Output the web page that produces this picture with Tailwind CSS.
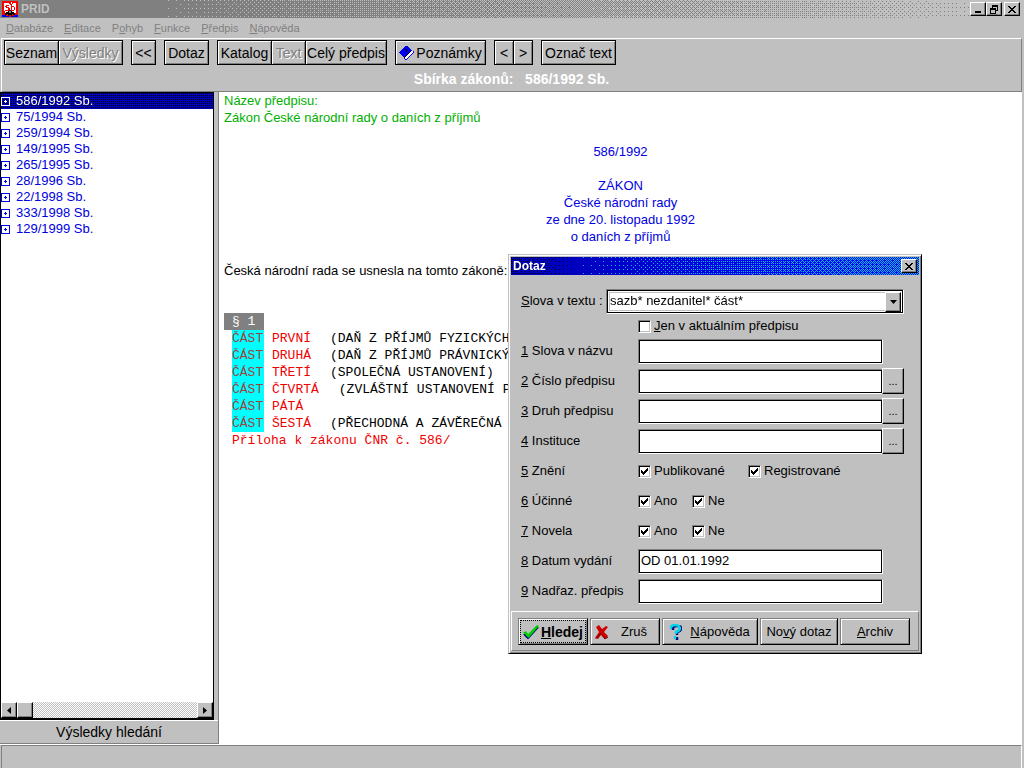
<!DOCTYPE html>
<html lang="cs">
<head>
<meta charset="utf-8">
<title>PRID</title>
<script src="https://cdn.jsdelivr.net/npm/@tailwindcss/browser@4"></script>
</head>
<body class="h-screen flex flex-col overflow-hidden bg-[#c0c0c0] text-black text-[13px] leading-4 font-['Liberation_Sans',Arial,sans-serif]">

<svg class="hidden">
  <symbol id="plus" viewBox="0 0 9 9"><path d="M.5 .5h8v8h-8zM3 4.500h3M4.500 3v3" fill="none" stroke="currentColor" shape-rendering="crispEdges"/></symbol>
  <symbol id="close" viewBox="0 0 8 7"><path d="M0 0h2v1h1v1h2V1h1V0h2v1H7v1H6v1H5v1h1v1h1v1h1v1H6V6H5V5H3v1H2v1H0V6h1V5h1V4h1V3H2V2H1V1H0z" shape-rendering="crispEdges"/></symbol>
  <symbol id="tick" viewBox="0 0 7 7"><path d="M0 2h1v1h1v1h1V3h1V2h1V1h1V0h1v3H6v1H5v1H4v1H3v1H2V6H1V5H0z" shape-rendering="crispEdges"/></symbol>
</svg>

<!-- Title bar -->
<header class="relative h-[18px] shrink-0 flex items-center">
  <canvas class="absolute inset-0 size-full" data-dither="gray"></canvas>
  <div class="relative flex-1 flex items-center gap-[3px] pl-[2px]">
    <svg class="w-4 h-4" viewBox="0 0 16 16" shape-rendering="crispEdges">
      <path fill="#f00" d="M0 0h16v16H0z"/>
      <path fill="#fff" d="M2 2h5v1h1v1h1V1h1v2h1V2h3v10H2z"/>
      <path fill="#f00" d="M4 4h3v1H4zM3 5h2v1H3zM4 6h3v1H4zM6 7h2v2H6zM3 9h4v1H3zM9 3h1v7H9zM10 5h2v1h-2zM12 6h1v3h-1zM10 9h2v1h-2zM2 10h1v2H2z"/>
      <path fill="#000" d="M7 9h2v1h1v1h2v1h1v2h-2v-1h-1v2H9v-1H7v1H6v-2H5v1H3v-2h1v-1h2v-1h1z"/>
      <path fill="#808080" d="M7 10h2v2H7z"/>
      <path fill="#00f" d="M0 14h4v1h3v1H0zM12 14h4v2H9v-1h3z"/>
    </svg>
    <h1 class="text-[12px] font-bold text-[#c0c0c0]">PRID</h1>
  </div>
  <div class="relative flex pr-1">
    <button aria-label="Minimalizovat" class="w-4 h-[14px] flex items-end justify-center pb-[2px] bg-[#c0c0c0] border border-t-white border-l-white border-r-black border-b-black shadow-[inset_-1px_-1px_#808080]"><svg class="w-[6px] h-[2px]" viewBox="0 0 6 2"><path d="M0 0h6v2H0z"/></svg></button>
    <button aria-label="Obnovit" class="w-4 h-[14px] flex items-center justify-center bg-[#c0c0c0] border border-t-white border-l-white border-r-black border-b-black shadow-[inset_-1px_-1px_#808080]"><svg class="w-2 h-[9px]" viewBox="0 0 8 9" shape-rendering="crispEdges"><path d="M2 0h6v6H6V5h1V2H3v1H2zM0 3h6v6H0zM1 5v3h4V5z" fill-rule="evenodd"/></svg></button>
    <button aria-label="Zavřít" class="ml-[2px] w-4 h-[14px] flex items-center justify-center bg-[#c0c0c0] border border-t-white border-l-white border-r-black border-b-black shadow-[inset_-1px_-1px_#808080]"><svg class="w-2 h-[7px]"><use href="#close"/></svg></button>
  </div>
</header>

<!-- Menu -->
<nav class="h-5 shrink-0 flex items-center gap-[11px] pl-[6px] text-[11px] text-[#808080]">
  <a href="#"><u>D</u>atabáze</a><a href="#"><u>E</u>ditace</a><a href="#">P<u>o</u>hyb</a><a href="#"><u>F</u>unkce</a><a href="#"><u>P</u>ředpis</a><a href="#"><u>N</u>ápověda</a>
</nav>

<!-- Toolbar -->
<section class="h-[54px] shrink-0 ml-px mr-[2px] border border-t-white border-l-white border-r-[#808080] border-b-[#808080]">
  <div class="pt-px pl-[2px] flex gap-2 text-[14px] whitespace-nowrap [&_button]:h-[25px] [&_button]:border [&_button]:border-black [&_button]:shadow-[inset_1px_1px_#fff,inset_-1px_-1px_#808080]">
    <div class="flex"><button class="w-[55px]">Seznam</button><button disabled class="w-[65px] -ml-px text-[#808080] [text-shadow:1px_1px_#fff]">Výsledky</button></div>
    <button class="w-[25px]">&lt;&lt;</button>
    <button class="w-[45px]">Dotaz</button>
    <div class="flex"><button class="w-[55px]">Katalog</button><button disabled class="w-[35px] -ml-px text-[#808080] [text-shadow:1px_1px_#fff]">Text</button><button class="w-[82px] -ml-px">Celý předpis</button></div>
    <button class="w-[91px] flex items-center justify-center gap-[2px]">
      <svg class="w-[15px] h-[14px]" viewBox="0 0 15 14" shape-rendering="crispEdges"><path fill="#0000f0" d="M0 6h1V5h1V4h1V3h1V2h1V1h1V0h3v1h1v1h1v1h1v1h1v1h-1v1h-1v1h-1v1H9v1H8v1H7v1H6v1H5v-1H4v-1H3V9H2V8H1V7H0z"/><path fill="#fff" d="M6 11h1v-1h1V9h1V8h1V7h1V6h1V5h2v2h-1v1h-1v1h-1v1h-1v1H9v1H8v1H6z"/><path d="M5 11.500h1M6 10.500h1M7 9.500h1M8 8.500h1M9 7.500h1M10 6.500h1M11 5.500h1M6 3.500h2M8 4.500h1M7 5.500h1" stroke="#000"/><path fill="#0000f0" d="M5 12h1v1h2v1H6v-1H5zM8 12h1v1H8zM9 11h1v1H9zM10 10h1v1h-1zM11 9h1v1h-1zM12 8h1v1h-1zM13 7h1v1h-1zM14 5h1v2h-1z"/></svg>
      Poznámky</button>
    <div class="flex"><button class="w-5">&lt;</button><button class="w-5 -ml-px">&gt;</button></div>
    <button class="w-[75px]">Označ text</button>
  </div>
  <h2 class="h-[26px] pt-px flex items-center justify-center text-[14px] font-bold text-white whitespace-pre">Sbírka zákonů:   586/1992 Sb.</h2>
</section>

<!-- Work area -->
<main class="flex-1 min-h-0 flex mr-[2px] bg-white">
  <aside class="w-[219px] shrink-0 flex flex-col bg-[#c0c0c0] border-r border-[#808080]">
    <div class="flex-1 flex flex-col w-[214px] bg-white border border-b-2 border-black">
      <ul class="flex-1 text-[#0000e0] [&_a]:flex [&_a]:items-center [&_a]:gap-[6px] [&_a]:h-4 [&_svg]:size-[9px]">
        <li class="relative text-white"><canvas class="absolute inset-0 size-full" data-dither="navy"></canvas><a href="#" class="relative"><svg><use href="#plus"/></svg>586/1992 Sb.</a></li>
        <li><a href="#"><svg><use href="#plus"/></svg>75/1994 Sb.</a></li>
        <li><a href="#"><svg><use href="#plus"/></svg>259/1994 Sb.</a></li>
        <li><a href="#"><svg><use href="#plus"/></svg>149/1995 Sb.</a></li>
        <li><a href="#"><svg><use href="#plus"/></svg>265/1995 Sb.</a></li>
        <li><a href="#"><svg><use href="#plus"/></svg>28/1996 Sb.</a></li>
        <li><a href="#"><svg><use href="#plus"/></svg>22/1998 Sb.</a></li>
        <li><a href="#"><svg><use href="#plus"/></svg>333/1998 Sb.</a></li>
        <li><a href="#"><svg><use href="#plus"/></svg>129/1999 Sb.</a></li>
      </ul>
      <div class="h-4 flex bg-[repeating-conic-gradient(#fff_0_25%,#c0c0c0_0_50%)] bg-[length:2px_2px]">
        <button aria-label="Doleva" class="w-4 flex items-center justify-center bg-[#c0c0c0] border border-t-white border-l-white border-r-black border-b-black shadow-[inset_-1px_-1px_#808080]"><svg class="w-1 h-[7px]" viewBox="0 0 4 7"><path d="M4 0v7L0 3.500z"/></svg></button>
        <button aria-label="Posuvník" class="w-4 bg-[#c0c0c0] border border-t-white border-l-white border-r-black border-b-black shadow-[inset_-1px_-1px_#808080]"></button>
        <button aria-label="Doprava" class="ml-auto w-4 flex items-center justify-center bg-[#c0c0c0] border border-t-white border-l-white border-r-black border-b-black shadow-[inset_-1px_-1px_#808080]"><svg class="w-1 h-[7px]" viewBox="0 0 4 7"><path d="M0 0v7l4-3.500z"/></svg></button>
      </div>
    </div>
    <h3 class="h-6 border-y border-t-white border-b-[#808080] flex items-center justify-center text-[14px]">Výsledky hledání</h3>
  </aside>

  <article class="flex-1 min-w-0 leading-[17px] whitespace-nowrap">
    <div class="pl-[5px] text-[#00b000]"><p>Název předpisu:</p><p>Zákon České národní rady o daních z příjmů</p></div>
    <div class="py-[17px] text-center text-[#0000e0]">
      <p class="pb-[17px]">586/1992</p>
      <p>ZÁKON</p><p>České národní rady</p><p>ze dne 20. listopadu 1992</p><p>o daních z příjmů</p>
    </div>
    <p class="pl-[5px] pb-[34px]">Česká národní rada se usnesla na tomto zákoně:</p>
    <div class="pl-[5px] font-['Liberation_Mono',monospace]">
      <p class="w-10 pl-2 bg-[#808080] text-white">§ 1</p>
      <div class="pl-2 [&>p]:flex [&>p]:gap-2 [&_mark]:w-8 [&_mark]:bg-[#00ffff] [&_mark]:text-[#a04040] [&_b]:min-w-[50px] [&_b]:font-normal [&_b]:text-[#f00000]">
        <p><mark>ČÁST</mark><b>PRVNÍ</b><span>(DAŇ Z PŘÍJMŮ FYZICKÝCH</span></p>
        <p><mark>ČÁST</mark><b>DRUHÁ</b><span>(DAŇ Z PŘÍJMŮ PRÁVNICKÝ</span></p>
        <p><mark>ČÁST</mark><b>TŘETÍ</b><span>(SPOLEČNÁ USTANOVENÍ)</span></p>
        <p><mark>ČÁST</mark><b class="pr-3">ČTVRTÁ</b><span>(ZVLÁŠTNÍ USTANOVENÍ P</span></p>
        <p><mark>ČÁST</mark><b>PÁTÁ</b></p>
        <p><mark>ČÁST</mark><b>ŠESTÁ</b><span>(PŘECHODNÁ A ZÁVĚREČNÁ</span></p>
        <p><b>Příloha k zákonu ČNR č. 586/</b></p>
      </div>
    </div>
  </article>
</main>

<!-- Status bar -->
<footer class="h-6 shrink-0 border-t border-white mr-[2px]"><div class="h-full ml-px border-t border-l border-r border-r-white border-t-[#808080] border-l-[#808080]"></div></footer>

<!-- Query dialog -->
<form role="dialog" aria-label="Dotaz" class="absolute left-[508px] top-[254px] w-[414px] bg-[#c0c0c0] p-[2px] border border-t-[#c0c0c0] border-l-[#c0c0c0] border-r-black border-b-black shadow-[inset_1px_1px_#fff,inset_-1px_-1px_#808080]">
  <div class="relative h-[18px] flex items-center">
    <canvas class="absolute inset-0 size-full" data-dither="blue"></canvas>
    <h2 class="relative flex-1 pl-[2px] text-[12px] font-bold text-white">Dotaz</h2>
    <button type="button" aria-label="Zavřít" class="relative mr-[2px] w-4 h-[14px] flex items-center justify-center bg-[#c0c0c0] border border-t-white border-l-white border-r-black border-b-black shadow-[inset_-1px_-1px_#808080]"><svg class="w-2 h-[7px]"><use href="#close"/></svg></button>
  </div>

  <div class="pt-[11px] pb-[5px] pl-[10px] pr-[15px]
    [&_.row]:h-[30px] [&_.row]:flex [&_.row]:items-center [&_.name]:w-[117px] [&_.name]:shrink-0
    [&_.text]:w-[245px] [&_.text]:h-[25px] [&_.text]:bg-white [&_.text]:pl-[2px] [&_.text]:pb-[2px] [&_.text]:border [&_.text]:border-t-[#808080] [&_.text]:border-l-[#808080] [&_.text]:border-r-white [&_.text]:border-b-white [&_.text]:shadow-[inset_0_0_0_1px_#000] [&_.text]:outline-none
    [&_.more]:w-[22px] [&_.more]:h-[26px] [&_.more]:-ml-px [&_.more]:bg-[#c0c0c0] [&_.more]:border [&_.more]:border-t-white [&_.more]:border-l-white [&_.more]:border-r-black [&_.more]:border-b-black [&_.more]:shadow-[inset_-1px_-1px_#808080] [&_.more]:text-[11px]
    [&_.tick]:grid [&_.tick]:grid-cols-[13px_auto] [&_.tick]:gap-x-[3px] [&_.tick]:items-center
    [&_.tick_input]:appearance-none [&_.tick_input]:row-start-1 [&_.tick_input]:col-start-1 [&_.tick_input]:size-[13px] [&_.tick_input]:bg-white [&_.tick_input]:border [&_.tick_input]:border-t-[#808080] [&_.tick_input]:border-l-[#808080] [&_.tick_input]:border-r-white [&_.tick_input]:border-b-white [&_.tick_input]:shadow-[inset_1px_1px_#000,inset_-1px_-1px_#c0c0c0]
    [&_.tick_svg]:row-start-1 [&_.tick_svg]:col-start-1 [&_.tick_svg]:size-[7px] [&_.tick_svg]:ml-[3px] [&_.tick_svg]:pointer-events-none [&_.tick_svg]:z-10">
    <div class="row">
      <label for="words" class="w-[85px] shrink-0"><u>S</u>lova v textu :</label>
      <div class="relative flex-1">
        <select id="words" class="appearance-none w-full h-[25px] pl-[3px] pb-px bg-white border border-t-[#808080] border-l-[#808080] border-r-white border-b-white shadow-[inset_0_0_0_1px_#000,inset_0_0_0_2px_#fff,inset_0_0_0_3px_#c0c0c0] outline-none"><option>sazb* nezdanitel* část*</option></select>
        <span class="absolute right-[3px] top-[3px] w-4 h-5 flex items-center justify-center bg-[#c0c0c0] border border-t-white border-l-white border-r-black border-b-black shadow-[inset_-1px_-1px_#808080] pointer-events-none"><svg class="w-[7px] h-1" viewBox="0 0 7 4"><path d="M0 0h7L3.500 4z"/></svg></span>
      </div>
    </div>
    <div class="h-5 flex items-center pl-[117px]"><label class="tick"><input type="checkbox"><span><u>J</u>en v aktuálním předpisu</span></label></div>
    <div class="row"><label class="name" for="f1"><u>1</u> Slova v názvu</label><input class="text" id="f1" type="text"></div>
    <div class="row"><label class="name" for="f2"><u>2</u> Číslo předpisu</label><input class="text" id="f2" type="text"><button type="button" class="more">...</button></div>
    <div class="row"><label class="name" for="f3"><u>3</u> Druh předpisu</label><input class="text" id="f3" type="text"><button type="button" class="more">...</button></div>
    <div class="row"><label class="name" for="f4"><u>4</u> Instituce</label><input class="text" id="f4" type="text"><button type="button" class="more">...</button></div>
    <div class="row" role="group" aria-labelledby="g5"><span class="name" id="g5"><u>5</u> Znění</span>
      <label class="tick w-[110px]"><input type="checkbox" checked><svg><use href="#tick"/></svg><span>Publikované</span></label>
      <label class="tick"><input type="checkbox" checked><svg><use href="#tick"/></svg><span>Registrované</span></label></div>
    <div class="row" role="group" aria-labelledby="g6"><span class="name" id="g6"><u>6</u> Účinné</span>
      <label class="tick w-[54px]"><input type="checkbox" checked><svg><use href="#tick"/></svg><span>Ano</span></label>
      <label class="tick"><input type="checkbox" checked><svg><use href="#tick"/></svg><span>Ne</span></label></div>
    <div class="row" role="group" aria-labelledby="g7"><span class="name" id="g7"><u>7</u> Novela</span>
      <label class="tick w-[54px]"><input type="checkbox" checked><svg><use href="#tick"/></svg><span>Ano</span></label>
      <label class="tick"><input type="checkbox" checked><svg><use href="#tick"/></svg><span>Ne</span></label></div>
    <div class="row"><label class="name" for="f8"><u>8</u> Datum vydání</label><input class="text" id="f8" type="text" value="OD 01.01.1992"></div>
    <div class="row"><label class="name" for="f9"><u>9</u> Nadřaz. předpis</label><input class="text" id="f9" type="text"></div>
  </div>

  <div class="h-10 pt-[6px] pl-[6px] flex gap-[2px] border border-t-white border-l-white border-r-[#808080] border-b-[#808080] [&_button]:h-[27px] [&_button]:flex [&_button]:items-center [&_button]:justify-center [&_button]:whitespace-nowrap [&_button]:border [&_button]:border-t-[#808080] [&_button]:border-l-[#808080] [&_button]:border-r-black [&_button]:border-b-black [&_button]:shadow-[inset_1px_1px_#fff,inset_-1px_-1px_#808080]">
    <button type="submit" class="w-[70px] p-px font-bold"><span class="flex size-full items-center justify-center gap-[2px] border border-dotted border-black text-[14px]">
      <svg class="w-4 h-[14px]" viewBox="0 0 16 14"><path d="m1 9 4 4L15 2" fill="none" stroke="#000080" stroke-width="2"/><path d="M0 7.500 3 6l2 3 9-9 2 1L5.500 13z" fill="#00d000"/></svg><span><u>H</u>ledej</span></span></button>
    <button type="button" class="w-[70px] gap-3 pr-2"><svg class="w-[14px] h-[14px]" viewBox="0 0 14 14"><path d="M1 2 4 0l3 4 4-3 2 1-4 5 4 4-3 3-4-4-3 4-3-1 4-6z" fill="#d00000"/><path d="M1 13.500 6 8m1 2 3 4 3-2" fill="none" stroke="#600"/></svg>Zruš</button>
    <button type="button" class="w-24 gap-2"><svg class="w-3 h-4" viewBox="0 0 12 16"><path d="M2 6V4q0-2 4-2t4 2q0 3-4 4v3M6 13v3" fill="none" stroke="#000080" stroke-width="2.500" transform="translate(1 0)"/><path d="M1 5V4q0-3 4-3t5 3q0 3-4 4v2M5 12v3" fill="none" stroke="#00d8e8" stroke-width="2.500"/></svg><span><u>N</u>ápověda</span></button>
    <button type="button" class="w-[78px]"><span>No<u>v</u>ý dotaz</span></button>
    <button type="button" class="w-[70px]"><span><u>A</u>rchiv</span></button>
  </div>
</form>

<script>
// Paints ordered-dither fills: each ramp returns [base, second colour, share of the second].
const bayer = [0,32,8,40,2,34,10,42,48,16,56,24,50,18,58,26,12,44,4,36,14,46,6,38,60,28,52,20,62,30,54,22,3,35,11,43,1,33,9,41,51,19,59,27,49,17,57,25,15,47,7,39,13,45,5,37,63,31,55,23,61,29,53,21];
const ramps = {
  gray: t => [[128,128,128], [192,192,192], (t - 0.15) / 0.83],
  navy: () => [[0,0,192], [0,0,0], 0.25],
  blue: t => t < 0.15 ? [[0,0,192], [0,0,0], 0.25 - t * 1.5] : [[0,0,Math.min(255, 175 + t * 110)], [0,192,210], (t - 0.15) * 0.6]
};
function paint() {
  document.querySelectorAll('canvas[data-dither]').forEach(c => {
    const w = c.width = c.clientWidth, h = c.height = c.clientHeight;
    const g = c.getContext('2d'), img = g.createImageData(w, h);
    for (let y = 0; y < h; y++) for (let x = 0; x < w; x++) {
      const [a, b, s] = ramps[c.dataset.dither](x / w);
      const p = (bayer[(y & 7) * 8 + (x & 7)] + 0.5) / 64 < s ? b : a;
      img.data.set([p[0], p[1], p[2], 255], (y * w + x) * 4);
    }
    g.putImageData(img, 0, 0);
  });
}
addEventListener('load', paint);
addEventListener('resize', paint);
</script>
</body>
</html>
